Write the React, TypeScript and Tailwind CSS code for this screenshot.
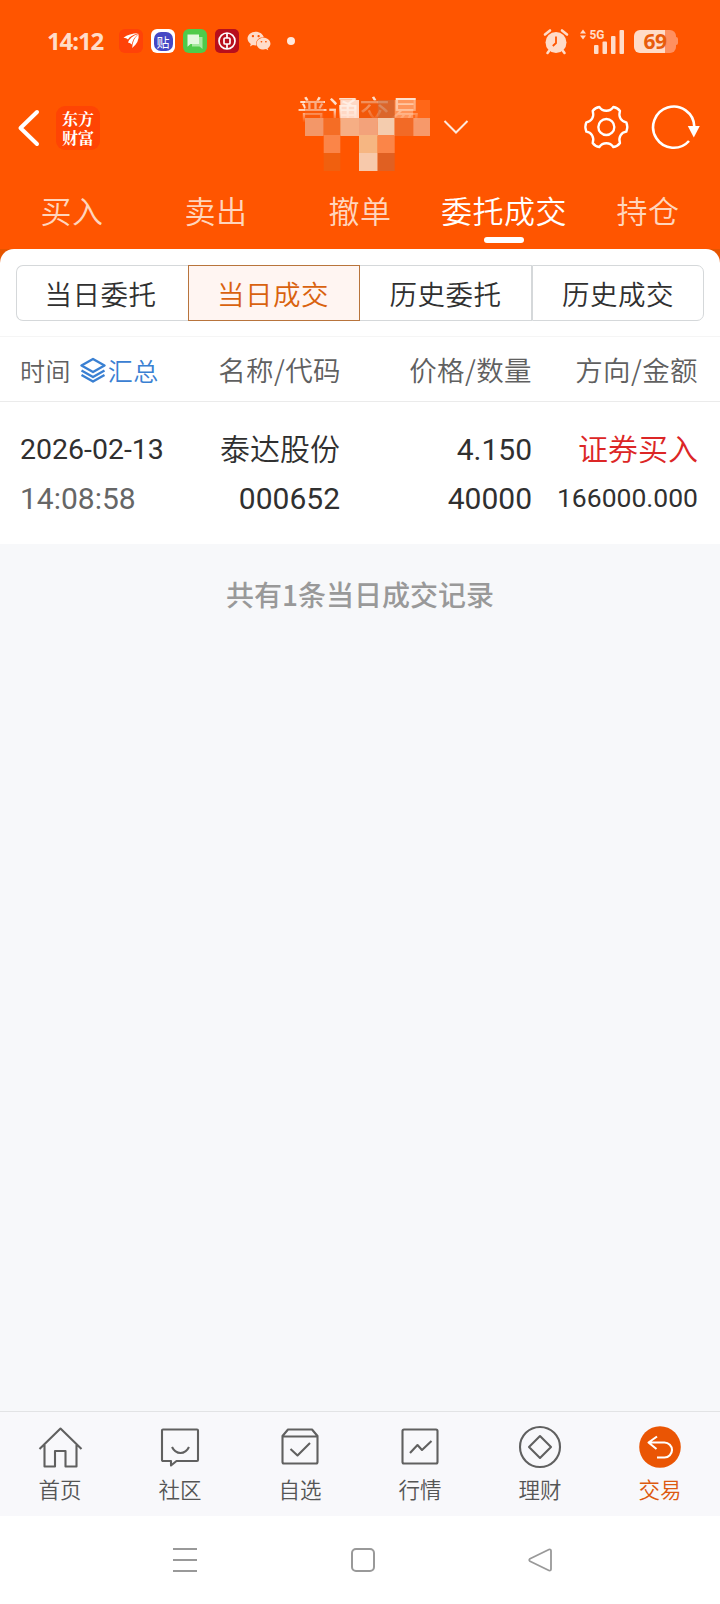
import type { ReactNode } from "react";
import { FaWeixin } from "react-icons/fa";

const TABS = ["买入", "卖出", "撤单", "委托成交", "持仓"];
const SEGMENTS = ["当日委托", "当日成交", "历史委托", "历史成交"];

function StatusBar() {
  return (
    <div className="flex h-[82px] items-center pl-[47px] pr-[41px] text-[#ffdcc9]">
      <span className="w-[72px] font-['Open_Sans',sans-serif] text-[24px] font-bold leading-none tracking-[-1.1px]">14:12</span>
      <div className="flex items-center gap-2">
        <svg className="size-6" viewBox="0 0 24 24">
          <rect width="24" height="24" rx="6" fill="#ff4208" />
          <g fill="#fff">
            <path d="M4.500 8.800Q10 4.500 19.500 4.300Q11 6.500 9 10.500Q7.500 8.800 4.500 8.800Z" />
            <path d="M9 13.500Q11 7.500 19.800 4.800Q14 9 12.700 15.500Q11.500 13.800 9 13.500Z" />
            <path d="M13.200 19Q13.500 10 19.600 5.300Q20.500 13 13.200 19Z" />
          </g>
        </svg>
        <div className="flex size-6 items-center justify-center rounded-md bg-white">
          <div className="flex size-[19px] items-center justify-center rounded-[7px] bg-[#4548c4] font-['Noto_Sans_CJK_SC',sans-serif] text-[13px] leading-none text-white">
            贴
          </div>
        </div>
        <svg className="size-6" viewBox="0 0 24 24">
          <rect width="24" height="24" rx="6" fill="#4fcb4b" />
          <path d="M9 8h10.500v12l-3-2.500H9z" fill="#a5e9a0" />
          <path d="M4.500 5.500H16V15H7.500l-3 2.800z" fill="#e3f9e0" />
        </svg>
        <svg className="size-6" viewBox="0 0 24 24">
          <rect width="24" height="24" rx="5" fill="#b80f1c" />
          <g fill="none" stroke="#fff" strokeWidth="1.700">
            <circle cx="12" cy="12" r="8" />
            <rect x="9" y="9" width="6" height="6" rx="1" />
            <path d="M12 4v5M12 15v5" />
          </g>
        </svg>
        <FaWeixin className="size-6" />
      </div>
      <span className="ml-[16px] size-2 rounded-full bg-[#ffe8dc]" />

      <svg className="ml-auto h-[27px] w-[26px]" viewBox="0 0 26 27">
        <circle cx="13" cy="14.500" r="10.500" fill="currentColor" />
        <path d="M2 6.500 7 2.500M24 6.500 19 2.500M6 23l-1.500 2M20 23l1.500 2" stroke="currentColor" strokeWidth="2.600" strokeLinecap="round" />
        <path d="M13 8.500v6.500L9.800 18" fill="none" stroke="#ff5500" strokeWidth="1.800" />
      </svg>
      <svg className="ml-[10px] h-[28px] w-[46px]" viewBox="0 0 46 28" fill="currentColor">
        <path d="M1 6.500 4 2.500l3 4zM1 8.500h6l-3 4z" />
        <text x="10.500" y="12" className="font-['Roboto',sans-serif] text-[13.500px] font-bold" textLength="15" lengthAdjust="spacingAndGlyphs">5G</text>
        <rect x="15" y="18" width="4.500" height="9" rx="1" />
        <rect x="23.500" y="14.500" width="4.500" height="12.500" rx="1" />
        <rect x="32" y="9" width="4.500" height="18" rx="1" />
        <rect x="40.500" y="3" width="4.500" height="24" rx="1" />
      </svg>
      <div className="ml-[9px] flex items-center">
        <div className="flex h-[23px] w-[42px] items-center justify-center rounded-[6px] bg-[linear-gradient(90deg,#ffdcc9_73%,#ff9060_73%)] font-['Open_Sans',sans-serif] text-[21px] font-bold leading-[23px] tracking-[-0.5px] text-[#e85c0c]">
          69
        </div>
        <span className="mr-px h-2 w-[2px] rounded-r-full bg-[#ff9060]" />
      </div>
    </div>
  );
}

// Blocks that cover the account number under the title
const MOSAIC = [
  { x: 26, y: 20, w: 18.700, c: "#f2621a", o: 0.4 },
  { x: 61.300, y: 20, w: 18.700, c: "#fff0e8", o: 0.85 },
  { x: 80, y: 20, w: 18.700, c: "#ea5a10", o: 0.6 },
  { x: 98.700, y: 20, w: 17, c: "#cf6c3a", o: 0.75 },
  { x: 115.700, y: 20, w: 18.600, c: "#ffb98c", o: 0.65 },
  { x: 134.300, y: 20, w: 16.700, c: "#ff7a30", o: 0.5 },
  { x: 26, y: 38, w: 18.700, c: "#f39768", o: 1 },
  { x: 44.700, y: 38, w: 16.600, c: "#f56d25", o: 1 },
  { x: 61.300, y: 38, w: 18.700, c: "#f6ae84", o: 1 },
  { x: 80, y: 38, w: 18.700, c: "#f3a27a", o: 1 },
  { x: 98.700, y: 38, w: 17, c: "#f4ccae", o: 1 },
  { x: 115.700, y: 38, w: 18.600, c: "#f26a26", o: 1 },
  { x: 134.300, y: 38, w: 16.700, c: "#f6a176", o: 0.9 },
  { x: 44.700, y: 55, w: 16.600, c: "#fb8548", o: 1 },
  { x: 80, y: 55, w: 18.700, c: "#f6b682", o: 1 },
  { x: 98.700, y: 55, w: 17, c: "#fb8548", o: 1 },
  { x: 44.700, y: 73, w: 16.600, c: "#f0600f", o: 1 },
  { x: 80, y: 73, w: 18.700, c: "#f7c9ab", o: 1 },
  { x: 98.700, y: 73, w: 17, c: "#e06022", o: 1 },
];

function TitleBar() {
  return (
    <div className="flex h-[92px] items-center pl-[17px] pr-[19px]">
      <svg className="h-[38px] w-6" viewBox="0 0 24 38" fill="none" stroke="#fff" strokeWidth="4" strokeLinecap="round" strokeLinejoin="round">
        <path d="M20 3 3.500 19 20 35" />
      </svg>
      <div className="ml-[15px] flex size-[44px] items-center justify-center rounded-[9px] bg-[#ff4404]">
        <p className="w-8 break-all font-['Noto_Serif_CJK_SC','Noto_Sans_CJK_SC',serif] text-[16px] font-bold leading-[19px] text-white">东方财富</p>
      </div>
      <div className="relative ml-[197px] h-[92px] w-[125px]">
        <span className="block whitespace-nowrap pt-[11px] font-['Noto_Sans_CJK_SC',sans-serif] text-[31px] leading-[34px] text-[#ffe0cc] [mask-image:linear-gradient(#000_58%,transparent_90%)]">
          普通交易
        </span>
        <svg className="absolute -left-[18px] -top-[2px] h-[110px] w-[200px]" viewBox="0 0 200 110">
          {MOSAIC.map((m) => (
            <rect key={`${m.x}-${m.y}`} x={m.x} y={m.y} width={m.w} height={18} fill={m.c} fillOpacity={m.o} />
          ))}
        </svg>
      </div>
      <svg className="-mt-[3px] ml-[21px] h-4 w-[26px]" viewBox="0 0 26 16" fill="none" stroke="#ffe9dc" strokeWidth="2">
        <path d="M1.500 2 13 13.500 24.500 2" />
      </svg>
      <svg className="-mt-0.5 ml-auto h-[44px] w-[46.670px]" viewBox="-70 -66 140 132" fill="none" stroke="#fff" strokeWidth="7" strokeLinejoin="round">
        <path d="M-21-60C-11-45 11-45 21-60Q34-58 41-48C35-30 45-16 60-14Q66 0 60 14C45 16 35 30 41 48Q34 58 21 60C11 45-11 45-21 60Q-34 58-41 48C-35 30-45 16-60 14Q-66 0-60-14C-45-16-35-30-41-48Q-34-58-21-60Z" />
        <circle r="24" />
      </svg>
      <svg className="-mt-0.5 ml-[21px] h-[46px] w-[50px]" viewBox="0 0 50 46" fill="none">
        <path d="M43.300 22.500A20.600 20.600 0 1 0 38 37" stroke="#fff" strokeWidth="2.600" />
        <path d="M36.800 22h12L42.800 33.500z" fill="#fff" />
      </svg>
    </div>
  );
}

function Tabs() {
  return (
    <div className="grid h-[75px] grid-cols-5 text-[31px] tracking-[0.5px] [font-weight:350] text-[#ffd5bd]">
      {TABS.map((tab) => {
        const active = tab === "委托成交";
        return (
          <div key={tab} className={active ? "flex flex-col items-center text-white" : "flex flex-col items-center"}>
            <span className="mt-[14px] whitespace-nowrap leading-[44px]">{tab}</span>
            {active && <span className="mt-[5px] h-1.5 w-10 rounded-full bg-white" />}
          </div>
        );
      })}
    </div>
  );
}

function Segments() {
  return (
    <div className="px-4 pb-[15px] pt-4">
      <div className="grid h-14 grid-cols-4 text-[27.500px] leading-none tracking-[0.5px] [font-weight:350]">
        {SEGMENTS.map((label, i) => (
          <div
            key={label}
            className={
              i === 1
                ? "flex items-center justify-center border border-[#b8743c] bg-[#fff5f2] pr-0.5 pt-0.5 text-[#d9620f]"
                : i === 0
                  ? "flex items-center justify-center rounded-l-[7px] border border-r-0 border-[#d5d8da] pr-1 pt-0.5"
                  : i === 2
                    ? "flex items-center justify-center border border-l-0 border-[#d5d8da] pt-0.5"
                    : "flex items-center justify-center rounded-r-[7px] border border-[#d5d8da] pt-0.5"
            }
          >
            {label}
          </div>
        ))}
      </div>
    </div>
  );
}

function Records() {
  return (
    <>
      <div className="flex h-[66px] items-center border-b border-t border-b-[#ebebeb] border-t-[#f5f5f5] pl-5 pr-[22px] pt-0.5 text-[27.500px] leading-none tracking-[0.4px] [font-weight:350] text-[#606060]">
        <div className="flex w-[175px] items-center text-[25px]">
          时间
          <svg className="ml-[9px] mr-[2px] h-[26px] w-[26px]" viewBox="0 0 26 26" fill="none" stroke="#3a80d2" strokeWidth="2.400" strokeLinejoin="round">
            <path d="M13 2 24.500 8.500 13 15 1.500 8.500z" />
            <path d="M1.500 13.500 13 20l11.500-6.500M1.500 18 13 24.500 24.500 18" />
          </svg>
          <span className="text-[#3a80d2]">汇总</span>
        </div>
        <span className="w-[146px] text-right">名称/代码</span>
        <span className="w-[191px] text-right">价格/数量</span>
        <span className="flex-1 text-right">方向/金额</span>
      </div>
      <div className="flex h-[142px] pl-5 pr-[22px] pt-6 font-['Roboto','Noto_Sans_CJK_SC',sans-serif] text-[30px] leading-[48px]">
        <div className="w-[175px]">
          <p className="text-[28.500px]">2026-02-13</p>
          <p className="pt-px text-[30px] text-[#666]">14:08:58</p>
        </div>
        <div className="w-[145px] text-right">
          <p className="[font-weight:350]">泰达股份</p>
          <p className="pt-px">000652</p>
        </div>
        <div className="w-[192px] text-right">
          <p>4.150</p>
          <p className="pt-px">40000</p>
        </div>
        <div className="flex-1 text-right">
          <p className="[font-weight:350] text-[#dc2626]">证券买入</p>
          <p className="text-[26.500px]">166000.000</p>
        </div>
      </div>
    </>
  );
}

const NAV: { label: string; icon: ReactNode }[] = [
  { label: "首页", icon: <path d="M1.500 22 22.500 1.500 43.500 22M6.500 18v21.500h10.500V24h10.500v15.500h11V18" /> },
  { label: "社区", icon: <path d="M5 2.500h34a1 1 0 0 1 1 1v29.500a1 1 0 0 1-1 1H18.500l-5.500 4.500v-4.500H5a1 1 0 0 1-1-1v-29.500a1 1 0 0 1 1-1zM14 20q3 6 8.500 6t8.500-6" /> },
  { label: "自选", icon: <path d="M4.500 9 10 2.500h24l5.500 6.500v26a1.500 1.500 0 0 1-1.500 1.500H6A1.500 1.500 0 0 1 4.500 35zM4.500 9.500h35M12.500 22l7 6.500L32 16" /> },
  { label: "行情", icon: <path d="M6 2.500h32a1.500 1.500 0 0 1 1.500 1.500V35a1.500 1.500 0 0 1-1.500 1.500H6A1.500 1.500 0 0 1 4.500 35V4A1.500 1.500 0 0 1 6 2.500zM12 26l7.500-8 4.500 5 9.500-9" /> },
  { label: "理财", icon: <><circle cx="22" cy="20" r="20" /><path d="M22 9 33 20 22 31 11 20z" /></> },
  { label: "交易", icon: <><circle cx="22" cy="20" r="20.800" fill="#ea5504" stroke="none" /><path d="M19 9.500 10.500 15.500l8 6.500M10.500 15.500h16a7.500 7.500 0 0 1 0 15h-7.500" stroke="#fff" /></> },
];

function BottomNav() {
  return (
    <nav className="grid h-[105px] grid-cols-6 border-t border-[#e2e3e5] bg-[#f8f8fb] text-[21.500px] [font-weight:350] text-[#555]">
      {NAV.map(({ label, icon }) => (
        <div key={label} className={label === "交易" ? "flex flex-col items-center text-[#dd5a10]" : "flex flex-col items-center"}>
          <svg className="mt-[15px] h-[42px] w-[45px] overflow-visible" viewBox="0 0 45 42" fill="none" stroke="#606060" strokeWidth="2.100" strokeLinejoin="round">
            {icon}
          </svg>
          <span className="mt-1 leading-[32px]">{label}</span>
        </div>
      ))}
    </nav>
  );
}

function SystemNav() {
  return (
    <div className="flex h-[88px] items-center bg-white pl-[173px] pr-[168px]">
      <svg className="h-6 w-6" viewBox="0 0 24 24" stroke="#999" strokeWidth="2">
        <path d="M0 1h24M0 12h24M0 23h24" />
      </svg>
      <div className="ml-[154px] size-6 rounded-[5px] border-2 border-[#999]" />
      <svg className="ml-auto h-6 w-6" viewBox="0 0 24 24" fill="none" stroke="#999" strokeWidth="1.800" strokeLinejoin="round">
        <path d="M21 1.500 2 10.800q-1.500 1.200 0 2.400L21 22.500q2 .5 2-1.500V3q0-2-2-1.500z" />
      </svg>
    </div>
  );
}

export default function App() {
  return (
    <div className="flex h-[1604px] w-[720px] flex-col overflow-hidden bg-[#f7f8fa] font-['Noto_Sans_CJK_SC',sans-serif] text-[#303030]">
      <header className="bg-[#ff5500]">
        <StatusBar />
        <TitleBar />
        <Tabs />
      </header>
      <main className="flex-1">
        <div className="bg-[#e65500]">
          <div className="rounded-t-[14px] bg-white">
            <Segments />
            <Records />
          </div>
        </div>
        <p className="pt-[30px] text-center text-[28px] font-medium leading-[40px] text-[#999]">共有1条当日成交记录</p>
      </main>
      <BottomNav />
      <SystemNav />
    </div>
  );
}
